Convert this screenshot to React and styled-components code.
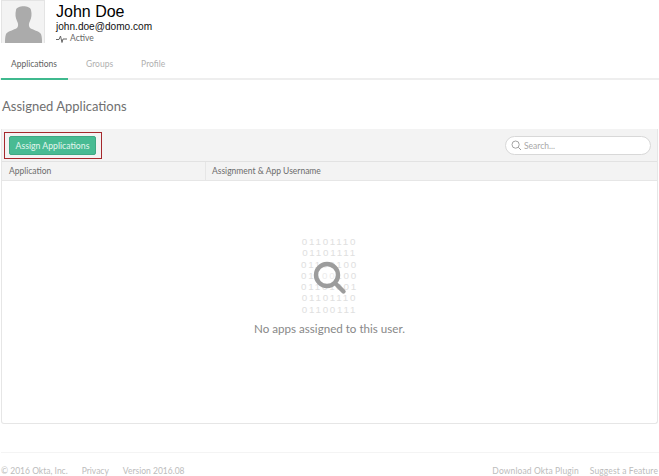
import React from "react";
import styled, { createGlobalStyle } from "styled-components";

const GlobalStyle = createGlobalStyle`
  html, body {
    margin: 0;
    padding: 0;
    background: #fff;
    overflow: hidden;
  }
  body {
    font-family: "Lato", "Liberation Sans", sans-serif;
  }
`;

const BINARY = ["01101110", "01101111", "01100100", "01100100", "01101001", "01101110", "01100111"];

const Page = styled.div`
  width: 659px;
  height: 476px;
  overflow: hidden;
  display: flex;
  flex-direction: column;
  & > * {
    flex-shrink: 0;
  }
`;

const Profile = styled.div`
  display: flex;
  height: 44px;
  padding-left: 1px;
`;

const Avatar = styled.div`
  width: 44px;
  height: 43px;
  box-sizing: border-box;
  border: 1px solid #e4e4e4;
  border-bottom: 0;
  background: #f3f3f3;
  & > svg {
    display: block;
  }
`;

const Info = styled.div`
  margin-left: 11px;
  display: flex;
  flex-direction: column;
  padding-top: 2px;
`;

const Name = styled.div`
  font-family: "Liberation Sans", Arial, sans-serif;
  font-size: 16px;
  line-height: 19px;
  color: #000;
`;

const Email = styled.div`
  font-family: "Liberation Sans", Arial, sans-serif;
  font-size: 10.1px;
  line-height: 12px;
  color: #111;
`;

const Status = styled.div`
  display: flex;
  align-items: center;
  gap: 3px;
  font-size: 8.5px;
  line-height: 11px;
  color: #666;
`;

const Tabs = styled.div`
  display: flex;
  height: 36px;
  box-sizing: border-box;
  border-bottom: 2px solid #eeeeee;
`;

const Tab = styled.div`
  height: 36px;
  box-sizing: border-box;
  padding: 14px ${(p) => (p.$active ? "11px" : "10px")} 0 ${(p) => (p.$active ? "10px" : "18px")};
  margin-left: ${(p) => (p.$active ? "1px" : "0")};
  font-size: 8.5px;
  line-height: 12px;
  color: ${(p) => (p.$active ? "#5f5f5f" : "#b0b0b0")};
  border-bottom: 2px solid ${(p) => (p.$active ? "#3fb98e" : "transparent")};
`;

const Heading = styled.h2`
  margin: 18px 0 0 2px;
  font-size: 13px;
  line-height: 16px;
  font-weight: 400;
  color: #707070;
`;

const Panel = styled.div`
  margin: 15px 0 0 1px;
  width: 657px;
  height: 295px;
  box-sizing: border-box;
  border: 1px solid #e6e6e6;
  border-top: 0;
  border-radius: 0 0 3px 3px;
  display: flex;
  flex-direction: column;
`;

const Toolbar = styled.div`
  height: 33px;
  box-sizing: border-box;
  background: #f3f3f3;
  border-bottom: 1px solid #e2e2e2;
  display: flex;
  align-items: center;
  justify-content: space-between;
  padding: 1px 6px 0 2px;
`;

const Highlight = styled.div`
  width: 98px;
  height: 27px;
  box-sizing: border-box;
  border: 1px solid #a5282c;
  display: flex;
  align-items: center;
  padding-left: 4px;
`;

const AssignButton = styled.button`
  width: 87px;
  height: 19px;
  padding: 0;
  border: 1px solid #3fa883;
  border-radius: 2px;
  background: #48bb93;
  color: #e4f6ef;
  font-family: inherit;
  font-size: 8.7px;
`;

const SearchBox = styled.div`
  width: 146px;
  height: 19px;
  box-sizing: border-box;
  background: #fff;
  border: 1px solid #d8d8d8;
  border-radius: 10px;
  display: flex;
  align-items: center;
  gap: 2px;
  padding-left: 5px;
  font-size: 8.5px;
  color: #a8a8a8;
`;

const HeaderRow = styled.div`
  height: 19px;
  box-sizing: border-box;
  background: #f3f3f3;
  border-bottom: 1px solid #e6e6e6;
  display: flex;
  font-size: 8.5px;
  color: #6c6c6c;
`;

const HeaderCell = styled.div`
  width: ${(p) => p.$width};
  box-sizing: border-box;
  padding-left: ${(p) => (p.$divider ? "7px" : "6px")};
  line-height: 18px;
  border-right: ${(p) => (p.$divider ? "1px solid #e6e6e6" : "0")};
`;

const Empty = styled.div`
  flex: 1;
  display: flex;
  flex-direction: column;
  align-items: center;
  padding-top: 55px;
`;

const Art = styled.div`
  position: relative;
  width: 58px;
  height: 81px;
`;

const Binary = styled.div`
  font-family: "Liberation Sans", sans-serif;
  font-size: 9.8px;
  letter-spacing: 1.75px;
  line-height: 11.3px;
  color: #e0e0e0;
  text-align: center;
`;

const Lens = styled.svg`
  position: absolute;
  left: 12px;
  top: 25px;
`;

const EmptyText = styled.div`
  margin-top: 5px;
  font-size: 11.6px;
  line-height: 14px;
  color: #888;
`;

const Footer = styled.div`
  margin-top: 28px;
  margin-left: 1px;
  border-top: 1px solid #f4f4f4;
  display: flex;
  justify-content: space-between;
  font-size: 8.5px;
  line-height: 12px;
  color: #bcbcbc;
  padding-top: 12px;
  padding-right: 1px;
`;

const FooterGroup = styled.div`
  display: flex;
  gap: ${(p) => p.$gap};
  letter-spacing: ${(p) => p.$spacing || "0"};
`;

const App = () => {
  return (
    <>
      <GlobalStyle />
      <Page>
        <Profile>
          <Avatar>
            <svg width="42" height="42" viewBox="0 0 42 42">
              <path
                d="M14 9 C15 4 28 4 29 9 C30 13 29.5 17 28 20 C26.5 23 26.5 25 28 27 C31 29 37 30 39 33 C40 36 40 39 40 42 L3 42 C3 39 3 36 4 33 C6 30 12 29 15 27 C16.5 25 16.5 23 15 20 C13.5 17 13 13 14 9 Z"
                fill="#ababab"
              />
            </svg>
          </Avatar>
          <Info>
            <Name>John Doe</Name>
            <Email>john.doe@domo.com</Email>
            <Status>
              <svg width="11" height="8" viewBox="0 0 11 8">
                <path d="M0 4.5 H3 L4.5 1 L6 7.5 L7 4 H11" fill="none" stroke="#666" strokeWidth="1" />
              </svg>
              Active
            </Status>
          </Info>
        </Profile>
        <Tabs>
          <Tab $active>Applications</Tab>
          <Tab>Groups</Tab>
          <Tab>Profile</Tab>
        </Tabs>
        <Heading>Assigned Applications</Heading>
        <Panel>
          <Toolbar>
            <Highlight>
              <AssignButton>Assign Applications</AssignButton>
            </Highlight>
            <SearchBox>
              <svg width="11" height="11" viewBox="0 0 11 11">
                <circle cx="4.6" cy="4.6" r="3.6" fill="none" stroke="#999" strokeWidth="0.9" />
                <path d="M7.3 7.3 L10 10" stroke="#999" strokeWidth="1" />
              </svg>
              Search...
            </SearchBox>
          </Toolbar>
          <HeaderRow>
            <HeaderCell $width="204px" $divider>Application</HeaderCell>
            <HeaderCell $width="450px">Assignment &amp; App Username</HeaderCell>
          </HeaderRow>
          <Empty>
            <Art>
              <Binary>
                {BINARY.map((line, i) => (
                  <div key={i}>{line}</div>
                ))}
              </Binary>
              <Lens width="36" height="36" viewBox="0 0 36 36">
                <circle cx="14" cy="14" r="11" fill="rgba(255,255,255,0.4)" stroke="#9c9c9c" strokeWidth="4.4" />
                <path d="M24 24 L30.5 30.5" stroke="#9c9c9c" strokeWidth="4.4" strokeLinecap="round" />
              </Lens>
            </Art>
            <EmptyText>No apps assigned to this user.</EmptyText>
          </Empty>
        </Panel>
        <Footer>
          <FooterGroup $gap="14px">
            <span>© 2016 Okta, Inc.</span>
            <span>Privacy</span>
            <span>Version 2016.08</span>
          </FooterGroup>
          <FooterGroup $gap="11px" $spacing="0.12px">
            <span>Download Okta Plugin</span>
            <span>Suggest a Feature</span>
          </FooterGroup>
        </Footer>
      </Page>
    </>
  );
};

export default App;
